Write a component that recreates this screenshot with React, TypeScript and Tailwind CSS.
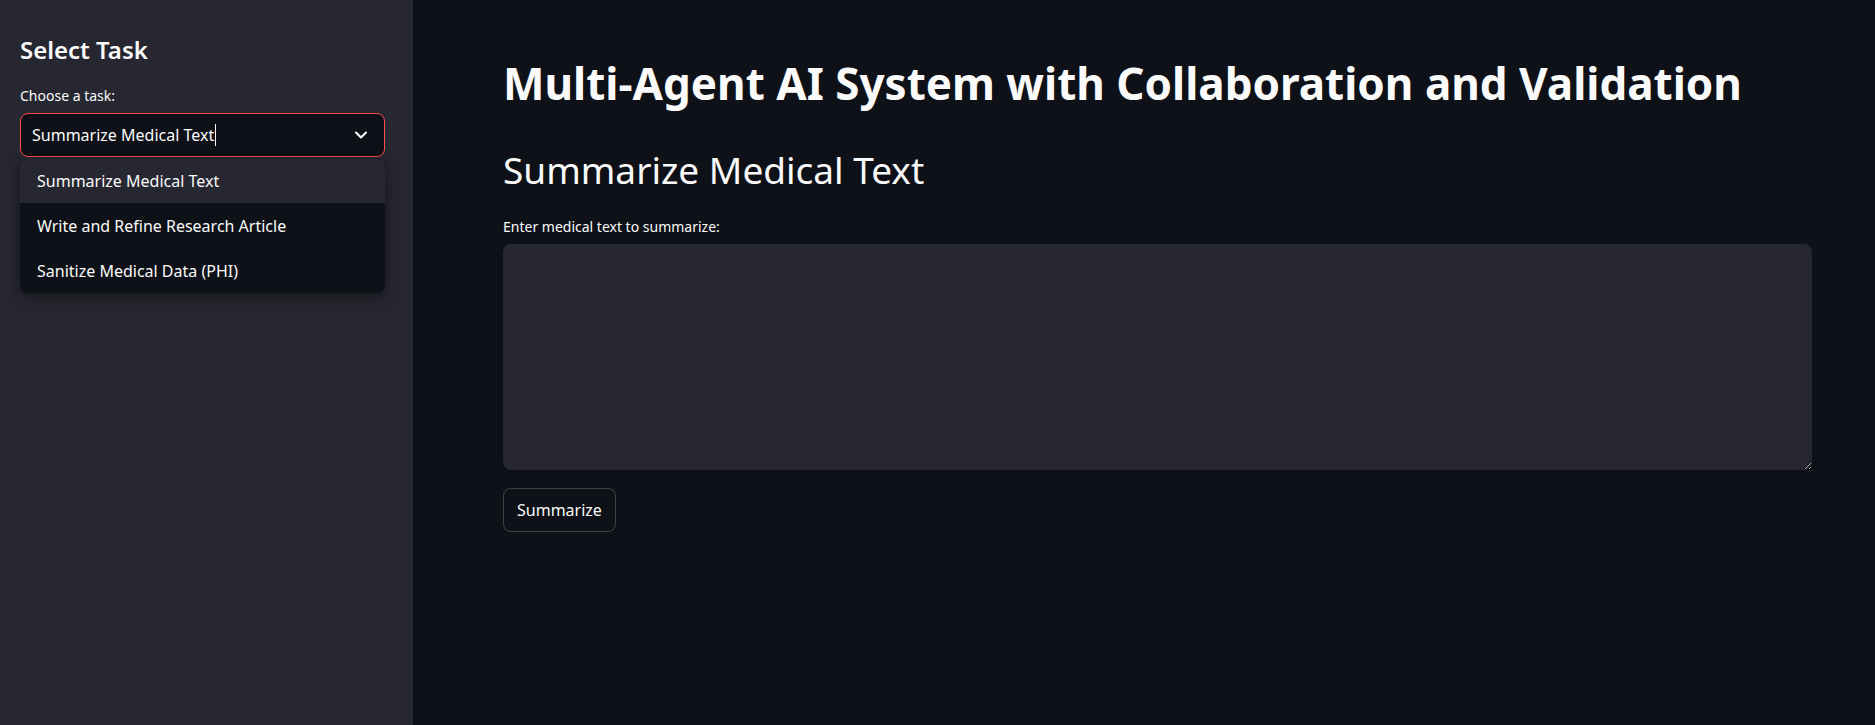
import React from "react";

export default function App() {
  const font = { fontFamily: '"Noto Sans", "Lato", sans-serif' };
  return (
    <div className="flex w-[1875px] h-[725px] bg-[#0e1117] text-[#fafafa]" style={font}>
      <aside className="w-[413px] h-full bg-[#262730] pl-[20px] pr-[28px] pt-[33px]">
        <h2 className="text-[24px] font-semibold leading-[34px]">Select Task</h2>
        <div className="mt-[19px] text-[14px] leading-[20px]">Choose a task:</div>
        <div className="relative mt-[7px]">
          <div className="flex items-center h-[44px] rounded-[8px] border border-[#ff4b4b] bg-[#0e1117] pl-[11px] pr-[13px]">
            <span className="text-[16px]">Summarize Medical Text</span>
            <span className="ml-[1px] w-[1px] h-[22px] bg-[#fafafa]" />
            <svg className="ml-auto" width="20" height="20" viewBox="0 0 24 24" fill="none" stroke="#fafafa" strokeWidth="2.5" strokeLinecap="round" strokeLinejoin="round">
              <path d="M6 9l6 6 6-6" />
            </svg>
          </div>
          <div className="absolute left-0 right-0 top-[46px] rounded-[8px] bg-[#0e1117] overflow-hidden shadow-[0_4px_16px_rgba(0,0,0,0.45)] py-0">
            <div className="h-[44px] flex items-center pl-[17px] bg-[#262730] text-[16px]">Summarize Medical Text</div>
            <div className="h-[45px] flex items-center pl-[17px] text-[16px]">Write and Refine Research Article</div>
            <div className="h-[45px] flex items-center pl-[17px] text-[16px]">Sanitize Medical Data (PHI)</div>
          </div>
        </div>
      </aside>
      <main className="flex-1 pl-[90px] pr-[63px] pt-[55px]">
        <h1 className="text-[44px] font-bold leading-[56px]">Multi-Agent AI System with Collaboration and Validation</h1>
        <h2 className="mt-[37px] text-[37px] font-normal leading-[44px]">Summarize Medical Text</h2>
        <div className="mt-[25px] text-[14px] leading-[20px]">Enter medical text to summarize:</div>
        <textarea className="mt-[7px] block w-full h-[226px] rounded-[8px] bg-[#262730] outline-none p-3 text-[16px] resize-y [color-scheme:dark]" />
        <button className="mt-[18px] h-[44px] px-[13px] rounded-[8px] border border-[rgba(250,250,250,0.2)] bg-[#0e1117] text-[16px]">Summarize</button>
      </main>
    </div>
  );
}
